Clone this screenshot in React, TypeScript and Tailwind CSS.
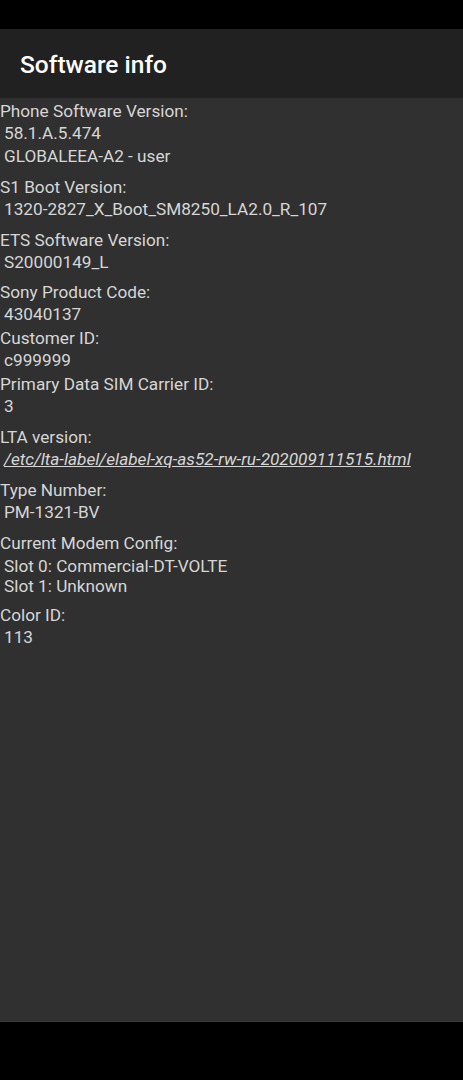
import React from "react";

type Item = { label: string; values: string[]; link?: boolean; mb: string; tight?: boolean };

const items: Item[] = [
    { label: "Phone Software Version:", values: ["58.1.A.5.474", "GLOBALEEA-A2 - user"], mb: "mb-[8.75px]" },
    { label: "S1 Boot Version:", values: ["1320-2827_X_Boot_SM8250_LA2.0_R_107"], mb: "mb-[8px]" },
    { label: "ETS Software Version:", values: ["S20000149_L"], mb: "mb-[7px]" },
    { label: "Sony Product Code:", values: ["43040137"], mb: "mb-[1px]" },
    { label: "Customer ID:", values: ["c999999"], mb: "mb-[1px]" },
    { label: "Primary Data SIM Carrier ID:", values: ["3"], mb: "mb-[8px]" },
    { label: "LTA version:", values: ["/etc/lta-label/elabel-xq-as52-rw-ru-202009111515.html"], link: true, mb: "mb-[8px]" },
    { label: "Type Number:", values: ["PM-1321-BV"], mb: "mb-[8px]" },
    { label: "Current Modem Config:", values: ["Slot 0: Commercial-DT-VOLTE", "Slot 1: Unknown"], mb: "mb-[7.5px]", tight: true },
    { label: "Color ID:", values: ["113"], mb: "mb-0" },
];

const App = () => {
    return (
        <div className="flex flex-col w-[463px] h-[1080px] bg-black font-['Roboto',sans-serif]">
            <div className="h-[29px] bg-black" />
            <div className="h-[69px] bg-[#212121] flex items-center pl-[20px] pt-[4px]">
                <h1 className="text-[24.5px] font-medium text-white leading-none">Software info</h1>
            </div>
            <div className="flex-1 bg-[#303030] pt-[1.5px] text-[17.2px] text-[#d6d6d6]">
                {items.map(item => (
                    <div key={item.label} className={item.mb}>
                        <div className="leading-[22.5px]">{item.label}</div>
                        <div className={item.tight ? "leading-[20px] pt-[2px]" : "leading-[22.5px]"}>
                            {item.values.map(v => (
                                <div key={v} className="pl-[4px] whitespace-nowrap">
                                    {item.link
                                        ? <span className="italic underline">{v}</span>
                                        : v}
                                </div>
                            ))}
                        </div>
                    </div>
                ))}
            </div>
            <div className="h-[59px] bg-black border-t border-[#3a3a3a]" />
        </div>
    );
};

export default App;
